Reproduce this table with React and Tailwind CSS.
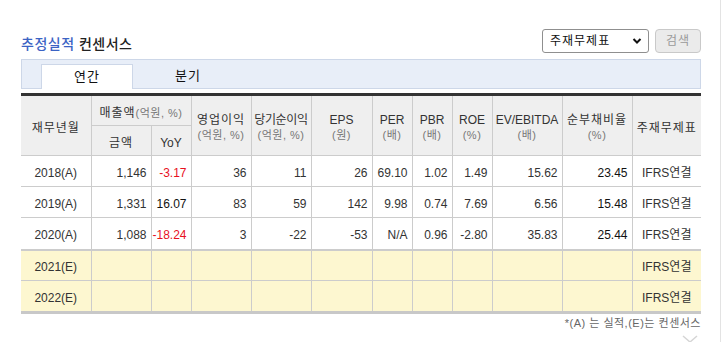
import React from "react";

const FONT = { fontFamily: '"Liberation Sans", "Noto Sans CJK KR", sans-serif' };

const rows = [
  { y: "2018(A)", v: ["1,146", "-3.17", "36", "11", "26", "69.10", "1.02", "1.49", "15.62", "23.45"], red: [1] },
  { y: "2019(A)", v: ["1,331", "16.07", "83", "59", "142", "9.98", "0.74", "7.69", "6.56", "15.48"], red: [] },
  { y: "2020(A)", v: ["1,088", "-18.24", "3", "-22", "-53", "N/A", "0.96", "-2.80", "35.83", "25.44"], red: [1] },
];

function Sub({ children }) {
  return <span className="text-[11px] text-[#777] tracking-[0.5px]">{children}</span>;
}

function K({ children }) {
  return <span className="tracking-[1px]">{children}</span>;
}

const TH = "font-normal pt-[4px] border-r border-b border-[#cccccc]";

export default function App() {
  return (
    <div className="w-[723px] h-[342px] bg-white relative overflow-hidden flex" style={FONT}>
      <div className="w-[720px] pl-[21px] pt-[29px]">
        <div className="w-[680px]">
          <div className="flex items-center justify-between h-[24px]">
            <div className="text-[14px] pt-[6px] leading-[16px] font-medium tracking-[0.5px]">
              <span className="text-[#3b63c4]">추정실적</span>{" "}
              <span className="text-[#222]">컨센서스</span>
            </div>
            <div className="flex items-center gap-[6px]">
              <div className="w-[107px] h-[24px] border border-[#8f8f8f] rounded-[3px] bg-white flex items-center justify-between pl-[7px] pr-[6px] text-[12px] text-[#111]">
                <span className="tracking-[1px]">주재무제표</span>
                <svg width="10" height="8" viewBox="0 0 10 8">
                  <path d="M1.5 2 L5 5.5 L8.5 2" fill="none" stroke="#111" strokeWidth="2" />
                </svg>
              </div>
              <div className="w-[46px] h-[24px] border border-[#c9c9c9] rounded-[4px] bg-[#ebebeb] flex items-center justify-center text-[12px] text-[#9a9a9a] tracking-[1px]">
                검색
              </div>
            </div>
          </div>

          <div className="mt-[6px] h-[30px] border border-[#cdd7e8] bg-[#e8eef8] flex items-end pl-[19px]">
            <div className="w-[92px] h-[25px] -mb-px bg-white border border-b-0 border-[#cdd7e8] flex items-center justify-center text-[13px] text-[#111] tracking-[1px]">
              연간
            </div>
            <div className="w-[92px] h-[25px] ml-[9px] flex items-center justify-center text-[13px] text-[#111] tracking-[1px]">
              분기
            </div>
          </div>

          <table className="mt-[4px] w-[680px] table-fixed border-collapse border-t-[3px] border-t-[#333] text-[12px] text-[#333]">
            <colgroup>
              <col className="w-[70px]" />
              <col className="w-[60px]" />
              <col className="w-[40px]" />
              <col className="w-[60px]" />
              <col className="w-[60px]" />
              <col className="w-[61px]" />
              <col className="w-[40px]" />
              <col className="w-[40px]" />
              <col className="w-[40px]" />
              <col className="w-[70px]" />
              <col className="w-[70px]" />
              <col className="w-[69px]" />
            </colgroup>
            <thead className="bg-[#efefef] text-[#333]">
              <tr className="h-[31px]">
                <th rowSpan={2} className={TH}><K>재무년월</K></th>
                <th colSpan={2} className={TH}>
                  <K>매출액</K><Sub>(억원, %)</Sub>
                </th>
                <th rowSpan={2} className={TH + " leading-[15px]"}>
                  <K>영업이익</K><br /><Sub>(억원, %)</Sub>
                </th>
                <th rowSpan={2} className={TH + " leading-[15px] whitespace-nowrap"}>
                  <span className="tracking-[-0.3px]">당기순이익</span><br /><Sub>(억원, %)</Sub>
                </th>
                <th rowSpan={2} className={TH + " leading-[15px]"}>
                  EPS<br /><Sub>(원)</Sub>
                </th>
                <th rowSpan={2} className={TH + " leading-[15px]"}>
                  PER<br /><Sub>(배)</Sub>
                </th>
                <th rowSpan={2} className={TH + " leading-[15px]"}>
                  PBR<br /><Sub>(배)</Sub>
                </th>
                <th rowSpan={2} className={TH + " leading-[15px]"}>
                  ROE<br /><Sub>(%)</Sub>
                </th>
                <th rowSpan={2} className={TH + " leading-[15px]"}>
                  EV/EBITDA<br /><Sub>(배)</Sub>
                </th>
                <th rowSpan={2} className={TH + " leading-[15px]"}>
                  <K>순부채비율</K><br /><Sub>(%)</Sub>
                </th>
                <th rowSpan={2} className="font-normal pt-[4px] border-b border-[#cccccc]"><K>주재무제표</K></th>
              </tr>
              <tr className="h-[30px]">
                <th className={TH}><K>금액</K></th>
                <th className={TH}>YoY</th>
              </tr>
            </thead>
            <tbody>
              {rows.map((r, i) => (
                <tr key={r.y} className={i === 2 ? "h-[32px] border-b-2 border-[#cccccc]" : "h-[31px] border-b border-[#cccccc]"}>
                  <td className="text-center pt-[4px] border-r border-[#cccccc]">{r.y}</td>
                  {r.v.map((v, j) => (
                    <td
                      key={j}
                      className={
                        "text-right pt-[4px] pr-[4px] border-r border-[#cccccc] " +
                        (r.red.includes(j) ? "text-[#e8101e]" : j === 9 || (j === 1 && i === 1) ? "text-[#111]" : "text-[#333]")
                      }
                    >
                      {v}
                    </td>
                  ))}
                  <td className="text-center pt-[4px]">IFRS연결</td>
                </tr>
              ))}
              {["2021(E)", "2022(E)"].map((y, i) => (
                <tr key={y} className={i === 1 ? "h-[32px] bg-[#fdf7d0] border-b-[3px] border-[#c8c8c8]" : "h-[31px] bg-[#fdf7d0] border-b border-[#cccccc]"}>
                  <td className="text-center pt-[4px] border-r border-[#cccccc]">{y}</td>
                  {Array.from({ length: 10 }).map((_, j) => (
                    <td key={j} className="border-r border-[#cccccc]"></td>
                  ))}
                  <td className="text-center pt-[4px]">IFRS연결</td>
                </tr>
              ))}
            </tbody>
          </table>
          <div className="mt-[2px] text-right text-[11px] leading-[14px] text-[#666] tracking-[0.5px]">*(A) 는 실적,(E)는 컨센서스</div>
        </div>
      </div>
      <div className="flex-1 border-l border-[#e3e3e3]"></div>
      <svg className="absolute left-[682px] top-[335px]" width="16" height="8" viewBox="0 0 16 8">
        <path d="M1 1 L8 7 L15 1" fill="none" stroke="#d5d5d5" strokeWidth="1.5" />
      </svg>
    </div>
  );
}
